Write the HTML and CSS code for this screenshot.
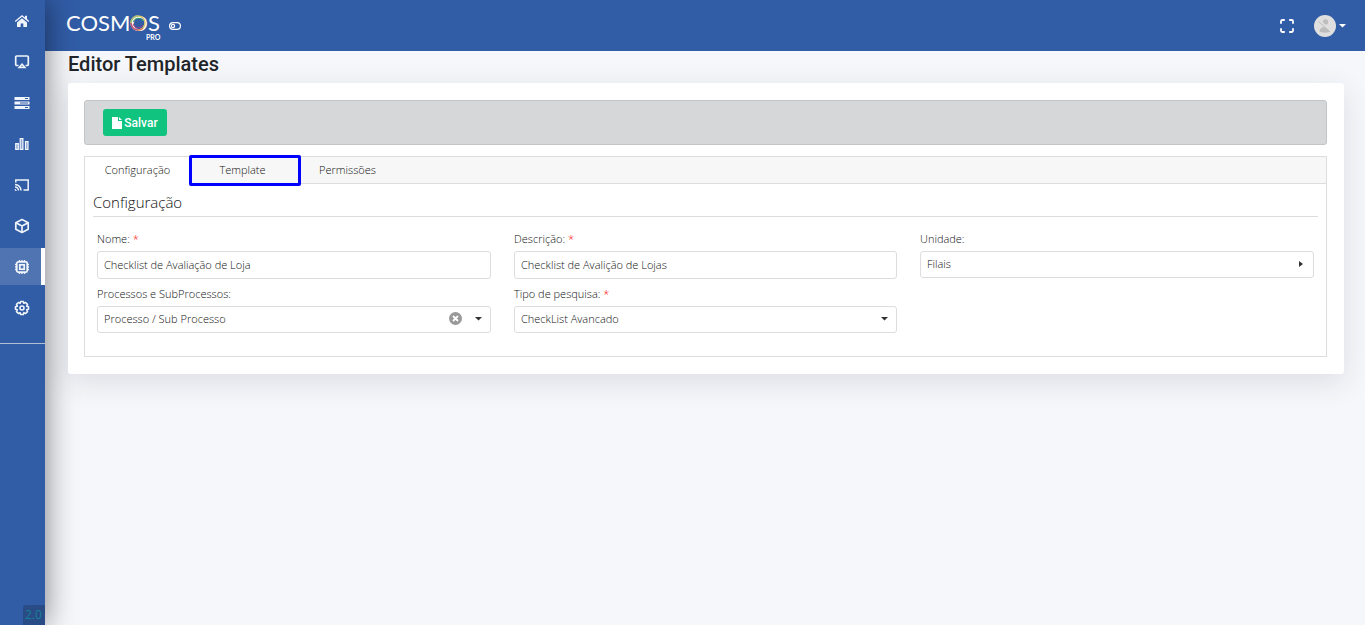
FILE: index.html
```html
<!DOCTYPE html>
<html lang="pt-BR">
<head>
<meta charset="utf-8">
<title>Editor Templates</title>
<link rel="stylesheet" href="styles.css">
</head>
<body>
<div class="app">
  <nav class="sidebar" aria-label="Menu principal">
    <ul class="menu">
      <li><a class="menu-link" href="#" aria-label="Início"><svg width="16" height="16" viewBox="0 0 16 16" fill="currentColor"><path d="M8 5.200 13 9.400V14H9.300V10.500H6.700V14H3V9.400Z"/><path d="M11 2.800H13V6L15.200 7.900 14.400 9 8 3.700 1.600 9 .8 7.900 8 2l3 2.400Z"/></svg></a></li>
      <li><a class="menu-link" href="#" aria-label="Telas"><svg width="16" height="16" viewBox="0 0 16 16" fill="none" stroke="currentColor" stroke-width="1.700"><path d="M4.500 11.500H2.700A1 1 0 0 1 1.700 10.500V3A1 1 0 0 1 2.700 2H13.300A1 1 0 0 1 14.300 3V10.500A1 1 0 0 1 13.300 11.500H11.500"/><path d="M8 10 11 13.500H5Z" fill="currentColor" fill-opacity=".4" stroke-width="1.400"/></svg></a></li>
      <li><a class="menu-link" href="#" aria-label="Registros"><svg width="16" height="16" viewBox="0 0 16 16"><path fill="currentColor" d="M.5 2H15.500V5H.5ZM.5 6.500H15.500V9.500H.5ZM.5 11H15.500V14H.5Z"/><path fill="#315ca6" d="M11 3H14V4H11ZM6 7.500H14V8.500H6ZM11 12H14V13H11Z"/></svg></a></li>
      <li><a class="menu-link" href="#" aria-label="Indicadores"><svg width="16" height="16" viewBox="0 0 16 16" fill="currentColor" fill-opacity=".5" stroke="currentColor" stroke-width="1.200"><path d="M1.700 7.600H4.300V13.400H1.700ZM6.200 2.600H8.900V13.400H6.200ZM11.500 5.600H14V13.400H11.500Z"/></svg></a></li>
      <li><a class="menu-link" href="#" aria-label="Transmitir"><svg width="16" height="16" viewBox="0 0 16 16" fill="none" stroke="currentColor" stroke-width="1.500"><path d="M1.800 5.500V3H14.200V13H9.500"/><path d="M1 7.500A6 6 0 0 1 7 13.500M1 10A3.500 3.500 0 0 1 4.500 13.500"/><path d="M1 12 2.500 13.500H1Z" fill="currentColor" stroke-width=".5"/></svg></a></li>
      <li><a class="menu-link" href="#" aria-label="Pacotes"><svg width="16" height="16" viewBox="0 0 16 16" fill="none" stroke="currentColor" stroke-width="1.700" stroke-linejoin="round"><path d="M8 1.500 14.200 4.700V11.300L8 14.500 1.800 11.300V4.700Z"/><path d="M1.800 4.700 8 7.900 14.200 4.700M8 7.900V14.500"/></svg></a></li>
      <li><a class="menu-link active" href="#" aria-label="Processos" aria-current="page"><svg width="16" height="16" viewBox="0 0 16 16" fill="none" stroke="currentColor" stroke-width="1.700"><rect x="2.800" y="2.800" width="10.400" height="10.400" rx="1.500"/><rect x="5.800" y="5.800" width="4.400" height="4.400"/><path stroke-width="1.400" d="M5.500 1V3M8 1V3M10.500 1V3M5.500 13V15M8 13V15M10.500 13V15M1 5.500H3M1 8H3M1 10.500H3M13 5.500H15M13 8H15M13 10.500H15"/></svg></a></li>
      <li><a class="menu-link" href="#" aria-label="Configurações"><svg width="16" height="16" viewBox="0 0 16 16" fill="none" stroke="currentColor" stroke-width="1.600" stroke-linejoin="round"><path d="M6.700 1.500H9.300L9.800 3.300 11.600 2.500 13.500 4.400 12.700 6.200 14.500 6.700V9.300L12.700 9.800 13.500 11.600 11.600 13.500 9.800 12.700 9.300 14.500H6.700L6.200 12.700 4.400 13.500 2.500 11.600 3.300 9.800 1.500 9.300V6.700L3.300 6.200 2.500 4.400 4.400 2.500 6.200 3.300Z"/><circle cx="8" cy="8" r="2"/></svg></a></li>
    </ul>
    <span class="version">2.0</span>
  </nav>

  <div class="page">
    <header class="topbar">
      <a class="brand" href="#" aria-label="Cosmos Pro">
        <svg width="100" height="32" viewBox="0 0 100 32">
          <text class="brand-name" x="0" y="21">COSMOS</text>
          <g fill="none" stroke-width="1.500">
            <circle cx="72" cy="13" r="7" stroke="#d5c76a"/>
            <path d="M65 13A7 7 0 0 1 72 6" stroke="#a9bf7c"/>
            <path d="M65 13A7 7 0 0 0 72 20" stroke="#c2507e"/>
            <path d="M72 20A7 7 0 0 0 77 18" stroke="#d9805f"/>
            <path d="M67 12A5.500 5.500 0 0 1 77 11" stroke="#38a06b" stroke-width="1"/>
            <path d="M67 14A5.500 5.500 0 0 0 77 15" stroke="#8b3f91" stroke-width="1"/>
          </g>
          <text class="brand-edition" x="80" y="30">PRO</text>
        </svg>
      </a>
      <button class="icon-button" type="button" aria-label="Alternar menu"><svg width="12" height="8" viewBox="0 0 12 8" fill="none" stroke="currentColor"><rect x=".6" y=".6" width="10.800" height="6.800" rx="3.400" stroke-width="1.200"/><circle cx="4" cy="4" r="1.600" stroke-width="1.200"/></svg></button>
      <div class="topbar-tools">
        <button class="icon-button" type="button" aria-label="Tela cheia"><svg width="14" height="14" viewBox="0 0 14 14" fill="none" stroke="currentColor" stroke-width="1.800"><path d="M1 4.800V2.200A1.200 1.200 0 0 1 2.200 1H4.800M9.200 1H11.800A1.200 1.200 0 0 1 13 2.200V4.800M13 9.200V11.800A1.200 1.200 0 0 1 11.800 13H9.200M4.800 13H2.200A1.200 1.200 0 0 1 1 11.800V9.200"/></svg></button>
        <button class="icon-button user" type="button" aria-label="Conta"><svg width="22" height="22" viewBox="0 0 22 22"><circle cx="11" cy="11" r="11" fill="#dfdfdf"/><circle cx="11.500" cy="7" r="2.700" fill="#bdbdbd"/><path d="M5.500 16.500C5.500 13.500 7.500 12 11 12S16.500 13.500 16.500 16.500C14 18 8 18 5.500 16.500Z" fill="#bdbdbd"/><path d="M5 5 17 16" stroke="#dfdfdf" stroke-width="1.800"/><path d="M4.500 6.500 16 17" stroke="#bdbdbd"/></svg><svg width="7" height="4" viewBox="0 0 7 4"><path d="M0 0H7L3.500 3.500Z" fill="currentColor"/></svg></button>
      </div>
    </header>

    <main class="content">
      <h1 class="page-title">Editor Templates</h1>
      <section class="card">
        <div class="toolbar">
          <button class="save" type="button"><svg width="10" height="12" viewBox="0 0 10 12" fill="currentColor"><path d="M0 0H6V4H10V12H0ZM7 0 10 3H7Z"/></svg>Salvar</button>
        </div>
        <div class="panel">
          <div class="tabs" role="tablist">
            <button class="tab selected" type="button" role="tab" aria-selected="true">Configuração</button>
            <button class="tab marked" type="button" role="tab" aria-selected="false">Template</button>
            <button class="tab" type="button" role="tab" aria-selected="false">Permissões</button>
          </div>
          <div class="panel-body">
            <h2 class="group-title">Configuração</h2>
            <form class="fields">
              <div class="field">
                <label for="nome">Nome: <span class="required">*</span></label>
                <input class="control" id="nome" type="text" value="Checklist de Avaliação de Loja">
              </div>
              <div class="field">
                <label for="descricao">Descrição: <span class="required">*</span></label>
                <input class="control" id="descricao" type="text" value="Checklist de Avalição de Lojas">
              </div>
              <div class="field">
                <label for="unidade">Unidade:</label>
                <div class="picker">
                  <select class="control" id="unidade"><option>Filais</option></select>
                  <svg class="arrow side" width="4" height="6" viewBox="0 0 4 6"><path d="M0 0 4 3 0 6Z" fill="#333"/></svg>
                </div>
              </div>
              <div class="field">
                <label for="processos">Processos e SubProcessos:</label>
                <div class="picker">
                  <select class="control" id="processos"><option>Processo / Sub Processo</option></select>
                  <button class="clear" type="button" aria-label="Limpar"><svg width="13" height="13" viewBox="0 0 13 13"><circle cx="6.500" cy="6.500" r="6.500" fill="#999"/><path d="M4 4 9 9M9 4 4 9" stroke="#fff" stroke-width="1.800"/></svg></button>
                  <svg class="arrow" width="7" height="4" viewBox="0 0 7 4"><path d="M0 0H7L3.500 3.500Z" fill="#333"/></svg>
                </div>
              </div>
              <div class="field">
                <label for="tipo">Tipo de pesquisa: <span class="required">*</span></label>
                <div class="picker">
                  <select class="control" id="tipo"><option>CheckList Avancado</option></select>
                  <svg class="arrow" width="7" height="4" viewBox="0 0 7 4"><path d="M0 0H7L3.500 3.500Z" fill="#333"/></svg>
                </div>
              </div>
            </form>
          </div>
        </div>
      </section>
    </main>
  </div>
</div>
</body>
</html>
```

FILE: styles.css
```css
* { box-sizing: border-box; }

body {
  margin: 0;
  background: #f5f7fb;
  color: #111;
  font: 300 11px/16px "Open Sans", sans-serif;
}

button, input, select { font: inherit; color: inherit; }
svg { display: block; flex: none; }

.app { display: flex; min-height: 100vh; }

.sidebar {
  position: relative;
  z-index: 2;
  display: flex;
  flex: none;
  flex-direction: column;
  justify-content: space-between;
  width: 45px;
  background: #315ca6;
  color: #fff;
  box-shadow: 0 0 30px rgba(0, 0, 0, .5);
}

.menu {
  display: flex;
  flex-direction: column;
  gap: 4px;
  margin: 0;
  padding: 2px 0 17px;
  border-bottom: 1px solid #b3bfd3;
  list-style: none;
}

.menu-link {
  display: flex;
  align-items: center;
  height: 37px;
  padding-left: 14px;
  color: #f0f4fb;
  border-right: 4px solid transparent;
}

.menu-link.active { background: #5074b1; background-clip: padding-box; border-color: #fff; }

.version {
  align-self: flex-end;
  width: 22px;
  padding: 1px 0 1px 2px;
  background: #294c86;
  color: #158196;
  border-top-left-radius: 3px;
  font: 12px/18px "Open Sans", sans-serif;
}

.page { flex: 1; min-width: 0; }

.topbar {
  display: flex;
  align-items: center;
  height: 51px;
  padding: 0 19px 0 21px;
  background: #315ca6;
  color: #fff;
}

.brand-name { fill: #fff; font: 22px Lato, sans-serif; }
.brand-edition { fill: #fff; font: 700 7px Lato, sans-serif; }

.icon-button {
  display: flex;
  align-items: center;
  gap: 3px;
  padding: 0;
  border: 0;
  background: none;
  color: #fff;
}

.brand { margin-right: 3px; }
.topbar-tools { display: flex; align-items: center; gap: 20px; margin-left: auto; }

.content { padding: 0 21px 0 23px; }

.page-title {
  margin: 0;
  padding: 1px 0 7px;
  color: #212529;
  font: 500 20px/24px Roboto, sans-serif;
}

.card {
  position: relative;
  z-index: 3;
  padding: 17px;
  padding-left: 16px;
  background: #fff;
  border-radius: 3px;
  box-shadow: 0 8px 30px rgba(40, 45, 60, .12);
}

.toolbar {
  display: flex;
  margin-bottom: 11px;
  padding: 8px 18px;
  background: #d6d7d9;
  border: 1px solid #c3c4c6;
  border-radius: 3px;
}

.save {
  display: flex;
  align-items: center;
  justify-content: center;
  gap: 2px;
  width: 64px;
  height: 27px;
  padding: 0;
  background: #10c47f;
  color: #fff;
  border: 0;
  border-radius: 3px;
  font: 500 12px/16px Roboto, sans-serif;
}

.panel { border: 1px solid #ddd; }
.tabs { display: flex; background: #f7f7f7; border-bottom: 1px solid #ddd; }

.tab {
  position: relative;
  width: 105px;
  height: 26px;
  padding: 0;
  background: none;
  border: 0;
}

.tab.selected { margin-bottom: -1px; height: 27px; padding-bottom: 1px; background: #fff; }

.tab.marked::after {
  content: "";
  position: absolute;
  inset: -2px -6px -3px -1px;
  border: 3px solid #00f;
  border-radius: 2px;
}

.panel-body { padding: 7px 8px 23px; }

.group-title {
  margin: 0 0 14px;
  padding-bottom: 2px;
  border-bottom: 1px solid #ddd;
  font-size: 15px;
  font-weight: 300;
  line-height: 23px;
}

.fields {
  display: grid;
  grid-template-columns: 394fr 383fr 394fr;
  gap: 7px 23px;
  padding: 0 4px;
}

.field { min-width: 0; }
.field label { display: block; margin-bottom: 4px; }
.required { color: #f00; }

.control {
  display: block;
  width: 100%;
  height: 28px;
  padding: 0 6px 1px;
  background: #fff;
  border: 1px solid #ddd;
  border-radius: 3px;
  appearance: none;
}

select.control { height: 27px; }
.picker { position: relative; }
.arrow { position: absolute; top: 11px; right: 9px; pointer-events: none; }
.arrow.side { top: 10px; right: 11px; }

.clear {
  position: absolute;
  top: 6px;
  right: 29px;
  padding: 0;
  border: 0;
  background: none;
}
```
